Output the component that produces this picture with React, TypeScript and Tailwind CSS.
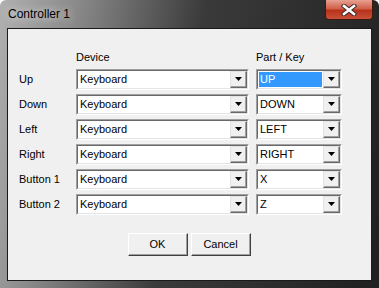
import React from "react";

const ROWS = [
  { label: "Up", device: "Keyboard", key: "UP", selected: true },
  { label: "Down", device: "Keyboard", key: "DOWN" },
  { label: "Left", device: "Keyboard", key: "LEFT" },
  { label: "Right", device: "Keyboard", key: "RIGHT" },
  { label: "Button 1", device: "Keyboard", key: "X" },
  { label: "Button 2", device: "Keyboard", key: "Z" },
];

function Arrow() {
  return (
    <svg width="7" height="4" viewBox="0 0 7 4">
      <path d="M0 0h7L3.5 4z" fill="#000" />
    </svg>
  );
}

// classic sunken combo box with a raised drop button
function Combo({ value, width, selected }: { value: string; width: string; selected?: boolean }) {
  return (
    <div className={`${width} h-[21px] border border-t-[#a0a0a0] border-l-[#a0a0a0] border-b-white border-r-white`}>
      <div className="flex h-full border border-t-[#696969] border-l-[#696969] border-b-[#e3e3e3] border-r-[#e3e3e3] bg-white">
        <div className="flex-1 flex items-center px-[1px] py-[1px] min-w-0">
          <span
            className={`h-full flex-1 flex items-center pl-[1px] leading-none ${
              selected ? "bg-[#3399ff] text-white" : "text-black"
            }`}
          >
            {value}
          </span>
        </div>
        <div className="w-[17px] h-full border border-t-[#e3e3e3] border-l-[#e3e3e3] border-b-[#696969] border-r-[#696969] bg-[#f0f0f0]">
          <div className="h-full flex items-center justify-center border-b border-r border-b-[#a0a0a0] border-r-[#a0a0a0]">
            <Arrow />
          </div>
        </div>
      </div>
    </div>
  );
}

function Button({ children }: { children: React.ReactNode }) {
  return (
    <div className="w-[60px] h-[23px] border border-t-white border-l-white border-b-[#404040] border-r-[#404040] bg-[#f0f0f0]">
      <div className="h-full flex items-center justify-center border-b border-r border-b-[#a0a0a0] border-r-[#a0a0a0]">
        {children}
      </div>
    </div>
  );
}

export default function App() {
  return (
    <div
      className="w-[379px] h-[288px] flex flex-col rounded-t-[6px] bg-[linear-gradient(100deg,#b0b0b0_0%,#8a8a8a_18%,#3a3a3a_48%,#202020_100%)] text-[11px] text-black"
      style={{ fontFamily: '"Liberation Sans", Arial, sans-serif' }}
    >
      <div className="h-[28px] flex items-start justify-between pl-[8px] pr-[6px]">
        <span className="mt-[7px] text-[12px] leading-[14px] text-black [text-shadow:0_0_8px_rgba(255,255,255,0.9)]">
          Controller 1
        </span>
        <div className="w-[48px] h-[20px] rounded-b-[4px] border border-t-0 border-[#3b1a12] bg-[linear-gradient(180deg,#e8a192_0%,#d0604a_45%,#b8321a_55%,#c8503a_100%)] flex items-center justify-center">
          <svg width="16" height="12" viewBox="0 0 16 12">
            <path d="M3 2l10 8M13 2L3 10" stroke="#3b2a28" strokeWidth="4.5" strokeLinecap="square" />
            <path d="M3 2l10 8M13 2L3 10" stroke="#fff" strokeWidth="2.6" strokeLinecap="square" />
          </svg>
        </div>
      </div>
      <div className="flex-1 px-[7px] pb-[7px]">
        <div className="h-full border border-[#1a1a1a] bg-[#f0f0f0] pl-[11px] pt-[22px]">
          <div className="grid grid-cols-[50px_173px_86px] gap-x-[7px] gap-y-[4px] items-center">
            <div />
            <div className="leading-[13px] pb-[1px] text-[#000]">Device</div>
            <div className="leading-[13px] pb-[1px]">Part / Key</div>
            {ROWS.map((r) => (
              <React.Fragment key={r.label}>
                <div>{r.label}</div>
                <Combo value={r.device} width="w-[173px]" />
                <Combo value={r.key} width="w-[86px]" selected={r.selected} />
              </React.Fragment>
            ))}
          </div>
          <div className="flex gap-[3px] pl-[109px] mt-[18px]">
            <Button>OK</Button>
            <Button>Cancel</Button>
          </div>
        </div>
      </div>
    </div>
  );
}
